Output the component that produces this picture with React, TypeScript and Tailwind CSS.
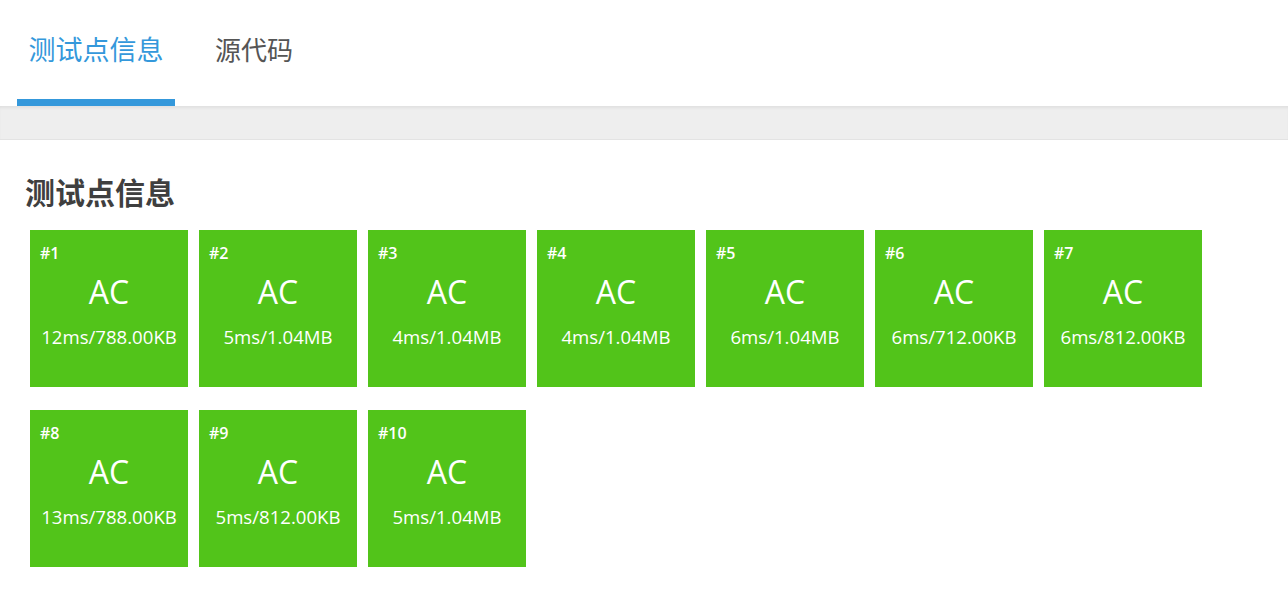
const cases = [
  { id: 1, info: "12ms/788.00KB" },
  { id: 2, info: "5ms/1.04MB" },
  { id: 3, info: "4ms/1.04MB" },
  { id: 4, info: "4ms/1.04MB" },
  { id: 5, info: "6ms/1.04MB" },
  { id: 6, info: "6ms/712.00KB" },
  { id: 7, info: "6ms/812.00KB" },
  { id: 8, info: "13ms/788.00KB" },
  { id: 9, info: "5ms/812.00KB" },
  { id: 10, info: "5ms/1.04MB" },
];

const font = { fontFamily: '"Open Sans", "Noto Sans CJK SC", sans-serif' };

export default function App() {
  return (
    <div className="min-h-[601px] bg-white" style={font}>
      <div className="flex h-[106px] items-stretch bg-white pl-[17px]">
        <div className="flex w-[158px] flex-col">
          <div className="flex flex-1 items-center justify-center pt-[1px] text-[27px] text-[#3498db]">
            测试点信息
          </div>
          <div className="h-[7px] bg-[#3498db]" />
        </div>
        <div className="ml-[40px] flex items-center pb-[6px] text-[26px] text-[#555]">源代码</div>
      </div>
      <div className="h-[34px] border-b border-[#e3e3e3] bg-[#eeeeee] shadow-[inset_0_3px_3px_-1px_rgba(0,0,0,0.06)]" />
      <div className="px-[25px] pt-[33px]">
        <h2 className="text-[30px] font-bold leading-[40px] text-[#3f3f3f]">测试点信息</h2>
        <div className="mt-[17px] flex w-[1190px] flex-wrap gap-x-[11px] gap-y-[23px] pl-[5px]">
          {cases.map((c) => (
            <div key={c.id} className="flex h-[157px] w-[158px] flex-col bg-[#52c41a] text-white">
              <div className="pl-[10px] pt-[13px] text-[16px] font-semibold leading-[20px]">#{c.id}</div>
              <div className="mt-[10px] text-center text-[32px] leading-[38px]">AC</div>
              <div className="mt-[14px] text-center text-[18.6px] font-medium leading-[24px]">{c.info}</div>
            </div>
          ))}
        </div>
      </div>
    </div>
  );
}
